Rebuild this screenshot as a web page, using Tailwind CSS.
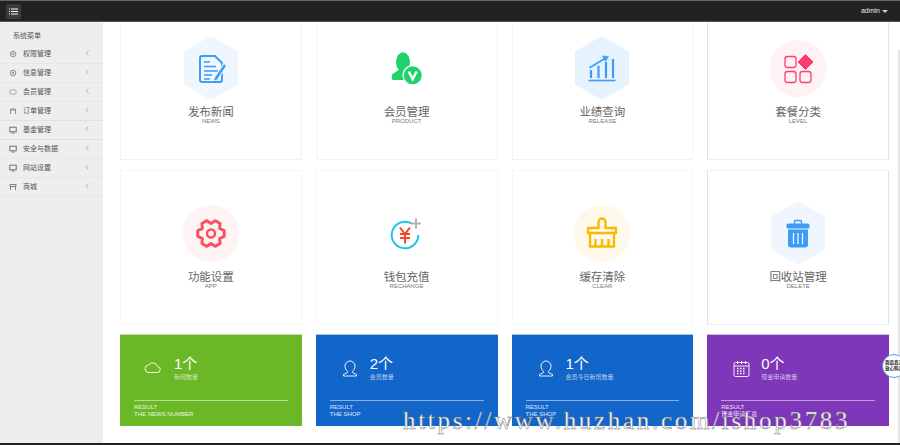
<!DOCTYPE html>
<html lang="en">
  <head>
    <meta charset="UTF-8" />
    <title>后台管理</title>
    <script src="https://cdn.jsdelivr.net/npm/@tailwindcss/browser@4"></script>
  </head>
  <body class="bg-white font-['Liberation_Sans','Noto_Sans_CJK_SC',sans-serif] overflow-hidden">
    <div class="relative h-[445px] w-[900px] flex flex-col overflow-hidden">
      <!-- top bar -->
      <header class="h-[22px] shrink-0 bg-[#222222] border-t border-t-[#666666] border-b border-b-[#555555] flex items-center justify-between pl-[6px] pr-[12px] relative z-10">
        <button class="w-[15px] h-[15px] rounded-[2px] bg-[#3c3c3c] flex items-center justify-center">
          <svg width="9" height="7" viewBox="0 0 9 7" fill="none" stroke="#ffffff" stroke-width="1">
            <path d="M0 1h1M2 1h7M0 3.5h1M2 3.5h7M0 6h1M2 6h7" />
          </svg>
        </button>
        <div class="flex items-center gap-[2px] text-[7px] text-[#e4e4e4]">
          <span>admin</span>
          <span class="w-0 h-0 border-x-[3px] border-x-transparent border-t-[3px] border-t-[#cccccc]"></span>
        </div>
      </header>

      <div class="flex-1 flex min-h-0">
        <!-- sidebar -->
        <aside class="w-[103px] shrink-0 bg-[#eeeeee] text-[#555555] text-[7px]">
          <div class="h-[23px] pl-[13px] pt-[8px] leading-[11px] border-b border-[#e8e8e8]">系统菜单</div>
          <div class="h-[19px] pl-[9px] pr-[14px] flex items-center border-b border-[#e6e6e6]">
            <svg class="w-[8px] h-[8px] shrink-0" viewBox="0 0 8 8" fill="none" stroke="#777777" stroke-width="0.8"><circle cx="4" cy="4" r="2.8" /><circle cx="4" cy="4" r="0.9" /></svg>
            <span class="ml-[6px] flex-1">权限管理</span>
            <svg class="w-[4px] h-[6px] -mt-[3px]" viewBox="0 0 4 6" fill="none" stroke="#aaaaaa" stroke-width="0.8"><path d="M3.5 .5 1 3l2.5 2.5" /></svg>
          </div>
          <div class="h-[19px] pl-[9px] pr-[14px] flex items-center border-b border-[#e6e6e6]">
            <svg class="w-[8px] h-[8px] shrink-0" viewBox="0 0 8 8" fill="none" stroke="#777777" stroke-width="0.8"><circle cx="4" cy="4" r="2.8" /><circle cx="4" cy="4" r="0.9" /></svg>
            <span class="ml-[6px] flex-1">信息管理</span>
            <svg class="w-[4px] h-[6px] -mt-[3px]" viewBox="0 0 4 6" fill="none" stroke="#aaaaaa" stroke-width="0.8"><path d="M3.5 .5 1 3l2.5 2.5" /></svg>
          </div>
          <div class="h-[19px] pl-[9px] pr-[14px] flex items-center border-b border-[#e6e6e6]">
            <svg class="w-[8px] h-[8px] shrink-0" viewBox="0 0 8 8" fill="none" stroke="#999999" stroke-width="0.8"><rect x="1" y="1.8" width="6" height="4.4" rx="1" /></svg>
            <span class="ml-[6px] flex-1">会员管理</span>
            <svg class="w-[4px] h-[6px] -mt-[3px]" viewBox="0 0 4 6" fill="none" stroke="#aaaaaa" stroke-width="0.8"><path d="M3.5 .5 1 3l2.5 2.5" /></svg>
          </div>
          <div class="h-[19px] pl-[9px] pr-[14px] flex items-center border-b border-[#e2e2e2]">
            <svg class="w-[8px] h-[8px] shrink-0" viewBox="0 0 8 8" fill="none" stroke="#777777" stroke-width="0.8"><path d="M1.5 7V2h5v5M3 2v2M5 2v2" /></svg>
            <span class="ml-[6px] flex-1">订单管理</span>
            <svg class="w-[4px] h-[6px] -mt-[3px]" viewBox="0 0 4 6" fill="none" stroke="#aaaaaa" stroke-width="0.8"><path d="M3.5 .5 1 3l2.5 2.5" /></svg>
          </div>
          <div class="h-[19px] pl-[9px] pr-[14px] flex items-center border-b border-[#e2e2e2]">
            <svg class="w-[8px] h-[8px] shrink-0" viewBox="0 0 8 8" fill="none" stroke="#666666" stroke-width="0.9"><rect x="0.8" y="1.2" width="6.4" height="4.6" /><path d="M2.5 7h3" /></svg>
            <span class="ml-[6px] flex-1">基金管理</span>
            <svg class="w-[4px] h-[6px] -mt-[3px]" viewBox="0 0 4 6" fill="none" stroke="#aaaaaa" stroke-width="0.8"><path d="M3.5 .5 1 3l2.5 2.5" /></svg>
          </div>
          <div class="h-[19px] pl-[9px] pr-[14px] flex items-center border-b border-[#e6e6e6]">
            <svg class="w-[8px] h-[8px] shrink-0" viewBox="0 0 8 8" fill="none" stroke="#666666" stroke-width="0.9"><rect x="0.8" y="1.2" width="6.4" height="4.6" /><path d="M2.5 7h3" /></svg>
            <span class="ml-[6px] flex-1">安全与数据</span>
            <svg class="w-[4px] h-[6px] -mt-[3px]" viewBox="0 0 4 6" fill="none" stroke="#aaaaaa" stroke-width="0.8"><path d="M3.5 .5 1 3l2.5 2.5" /></svg>
          </div>
          <div class="h-[19px] pl-[9px] pr-[14px] flex items-center border-b border-[#e6e6e6]">
            <svg class="w-[8px] h-[8px] shrink-0" viewBox="0 0 8 8" fill="none" stroke="#666666" stroke-width="0.9"><rect x="0.8" y="1.2" width="6.4" height="4.6" /><path d="M2.5 7h3" /></svg>
            <span class="ml-[6px] flex-1">网站设置</span>
            <svg class="w-[4px] h-[6px] -mt-[3px]" viewBox="0 0 4 6" fill="none" stroke="#aaaaaa" stroke-width="0.8"><path d="M3.5 .5 1 3l2.5 2.5" /></svg>
          </div>
          <div class="h-[19px] pl-[9px] pr-[14px] flex items-center border-b border-[#e6e6e6]">
            <svg class="w-[8px] h-[8px] shrink-0" viewBox="0 0 8 8" fill="none" stroke="#666666" stroke-width="0.8"><path d="M1 1.5h6v2H1zM1.5 3.5V7M6.5 3.5V7" /></svg>
            <span class="ml-[6px] flex-1">商城</span>
            <svg class="w-[4px] h-[6px] -mt-[3px]" viewBox="0 0 4 6" fill="none" stroke="#aaaaaa" stroke-width="0.8"><path d="M3.5 .5 1 3l2.5 2.5" /></svg>
          </div>
        </aside>

        <!-- content, scrolled a little so the first row sits under the bar -->
        <main class="flex-1 min-w-0 overflow-hidden pl-[17px] pr-[11px]">
          <div class="-mt-[17px] grid grid-cols-4 gap-x-[14px] gap-y-[10px]">
            <a class="h-[155px] border border-[#f2f2f2] flex flex-col items-center pt-[31px]">
              <svg width="58" height="62" viewBox="0 0 58 62" fill="none">
                <path d="M29 0 55 15V47L29 62 3 47V15Z" fill="#eff6fd" stroke="#eff6fd" stroke-width="2" stroke-linejoin="round" />
                <path d="M40 34v9a2 2 0 0 1-2 2H20a2 2 0 0 1-2-2V21a2 2 0 0 1 2-2h13l7 7v6" stroke="#3b9df8" stroke-width="2" />
                <path d="M22 25h6M22 29.500h12M22 34h14M22 38h8M22 42h6" stroke="#3b9df8" stroke-width="1.500" />
                <path d="M33 43 43 28" stroke="#eff6fd" stroke-width="5" />
                <path d="M33 43 43 28" stroke="#3b9df8" stroke-width="2.500" />
              </svg>
              <div class="mt-[6px] text-[11.5px] leading-[14px] text-[#666666]">发布新闻</div>
              <div class="text-[6px] leading-[5px] text-[#777777]">NEWS</div>
            </a>
            <a class="h-[155px] border border-[#f2f2f2] flex flex-col items-center pt-[31px]">
              <svg width="58" height="62" viewBox="0 0 58 62" fill="none">
                <ellipse cx="25" cy="25" rx="7" ry="9.700" fill="#20d26c" />
                <path d="M21 31c0 3.500-5.500 4.500-6.800 6.500-.5 1-.5 3-.5 4 0 1 1 1.500 2 1.500H30l3-10-5-2Z" fill="#20d26c" />
                <circle cx="34.700" cy="38.300" r="10.300" fill="#ffffff" />
                <circle cx="34.700" cy="38.300" r="9" fill="#20d26c" />
                <path d="M30.700 34.500l4 7.500 4-7.500" stroke="#ffffff" stroke-width="2.500" />
              </svg>
              <div class="mt-[6px] text-[11.5px] leading-[14px] text-[#666666]">会员管理</div>
              <div class="text-[6px] leading-[5px] text-[#777777]">PRODUCT</div>
            </a>
            <a class="h-[155px] border border-[#f2f2f2] flex flex-col items-center pt-[31px]">
              <svg width="58" height="62" viewBox="0 0 58 62" fill="none">
                <path d="M29 0 55 15V47L29 62 3 47V15Z" fill="#e6f3fe" stroke="#e6f3fe" stroke-width="2" stroke-linejoin="round" />
                <path d="M15.500 43.500h27" stroke="#3b9df8" stroke-width="1.600" />
                <path d="M18 41V33M25.500 41V28.700M33 41V25M40 41V22" stroke="#3b9df8" stroke-width="2.200" />
                <path d="M16.500 30.700 32 21.500" stroke="#3b9df8" stroke-width="1.700" />
                <path d="M35.500 19.500 29.500 19 32.500 24.500Z" fill="#3b9df8" stroke="#3b9df8" stroke-width=".6" />
              </svg>
              <div class="mt-[6px] text-[11.5px] leading-[14px] text-[#666666]">业绩查询</div>
              <div class="text-[6px] leading-[5px] text-[#777777]">RELEASE</div>
            </a>
            <a class="h-[155px] border-x border-x-[#e2e2e2] border-b border-b-[#eeeeee] border-t border-t-[#f2f2f2] flex flex-col items-center pt-[31px]">
              <svg width="58" height="62" viewBox="0 0 58 62" fill="none">
                <circle cx="29" cy="31.500" r="28.500" fill="#fff2f4" />
                <rect x="16" y="19.500" width="11" height="11" rx="2.500" stroke="#fb3f6c" stroke-width="1.300" />
                <rect x="16" y="34.500" width="11" height="11" rx="2.500" stroke="#fb3f6c" stroke-width="1.300" />
                <rect x="31" y="34.500" width="11" height="11" rx="2.500" stroke="#fb3f6c" stroke-width="1.300" />
                <path d="M36.500 17.500 44 25l-7.500 7.500L29 25Z" fill="#fb3f6c" stroke="#fb3f6c" stroke-linejoin="round" />
              </svg>
              <div class="mt-[6px] text-[11.5px] leading-[14px] text-[#666666]">套餐分类</div>
              <div class="text-[6px] leading-[5px] text-[#777777]">LEVEL</div>
            </a>

            <a class="h-[155px] border border-[#f6f6f6] flex flex-col items-center pt-[31px]">
              <svg width="58" height="62" viewBox="0 0 58 62" fill="none">
                <circle cx="29" cy="31.500" r="28.500" fill="#fff4f4" />
                <path d="M42.200 28.700 37.660 26.500 38.030 21.470 33.170 18.660 29 21.500 24.830 18.660 19.970 21.470 20.340 26.500 15.800 28.700V34.300L20.340 36.500 19.970 41.530 24.830 44.340 29 41.500 33.170 44.340 38.030 41.530 37.660 36.500 42.200 34.300Z" stroke="#fb5060" stroke-width="3" stroke-linejoin="round" />
                <circle cx="29" cy="31.500" r="4" stroke="#fb5060" stroke-width="2.500" />
              </svg>
              <div class="mt-[6px] text-[11.5px] leading-[14px] text-[#666666]">功能设置</div>
              <div class="text-[6px] leading-[5px] text-[#777777]">APP</div>
            </a>
            <a class="h-[155px] border border-[#f6f6f6] flex flex-col items-center pt-[31px]">
              <svg width="58" height="62" viewBox="0 0 58 62" fill="none">
                <path d="M33.700 21.500A13.300 13.300 0 1 0 40.300 33" stroke="#1fc4ee" stroke-width="2" />
                <path d="M22 25.500l5 6.500 5-6.500M22 32h10M22 36h10M27 32v9.500" stroke="#f5452f" stroke-width="2" />
                <path d="M38 16.500v10M33 21.500h10" stroke="#b4b4b4" stroke-width="2" />
              </svg>
              <div class="mt-[6px] text-[11.5px] leading-[14px] text-[#666666]">钱包充值</div>
              <div class="text-[6px] leading-[5px] text-[#777777]">RECHANGE</div>
            </a>
            <a class="h-[155px] border border-[#f6f6f6] flex flex-col items-center pt-[31px]">
              <svg width="58" height="62" viewBox="0 0 58 62" fill="none">
                <circle cx="29" cy="31.500" r="28.500" fill="#fff9ec" />
                <path d="M25.500 26v-6a3.500 3.500 0 0 1 7 0v6H43v5H15v-5Z" stroke="#fdb900" stroke-width="2.400" stroke-linejoin="round" />
                <path d="M17 31v13.500h24V31M22.500 44v-7M29 44v-7M35.500 44v-7" stroke="#fdb900" stroke-width="2.400" />
              </svg>
              <div class="mt-[6px] text-[11.5px] leading-[14px] text-[#666666]">缓存清除</div>
              <div class="text-[6px] leading-[5px] text-[#777777]">CLEAR</div>
            </a>
            <a class="h-[155px] border-x border-x-[#e2e2e2] border-b border-b-[#eeeeee] border-t border-t-[#f2f2f2] flex flex-col items-center pt-[31px]">
              <svg width="58" height="62" viewBox="0 0 58 62" fill="none">
                <path d="M29 0 55 15V47L29 62 3 47V15Z" fill="#eff6fd" stroke="#eff6fd" stroke-width="2" stroke-linejoin="round" />
                <path d="M25.500 22v-2a1.500 1.500 0 0 1 1.500-1.500h4a1.500 1.500 0 0 1 1.500 1.500v2" stroke="#3b9df8" stroke-width="1.400" />
                <rect x="17.500" y="21.500" width="23" height="5" rx="1.500" fill="#3b9df8" />
                <path d="M19 27.500h20v15a3 3 0 0 1-3 3H22a3 3 0 0 1-3-3Z" fill="#3b9df8" />
                <path d="M24.500 31v11M29 31v11M33.500 31v11" stroke="#ffffff" stroke-width="1.200" />
              </svg>
              <div class="mt-[6px] text-[11.5px] leading-[14px] text-[#666666]">回收站管理</div>
              <div class="text-[6px] leading-[5px] text-[#777777]">DELETE</div>
            </a>
          </div>

          <!-- stat tiles -->
          <div class="mt-[9px] grid grid-cols-4 gap-x-[14px]">
            <div class="h-[92px] bg-[#6ab826] border-t border-t-[#c5dfa8] px-[14px] text-white flex flex-col">
              <div class="h-[65px] flex pt-[20px] pl-[10px]">
                <svg class="mt-[5px]" width="17" height="14" viewBox="0 0 17 14" fill="none" stroke="#ffffff" stroke-width="0.900"><path d="M4 12.500H13a3 3 0 0 0 .5-6A5 5 0 0 0 4.500 5 3.800 3.800 0 0 0 4 12.500Z" /></svg>
                <div class="ml-[13px]">
                  <div class="text-[15px] leading-[18px]">1个</div>
                  <div class="text-[6px] leading-[8px] text-white/70">新闻数量</div>
                </div>
              </div>
              <div class="border-t border-white/50 pt-[3px] text-[6px] leading-[7px] text-white/85">RESULT<br />THE NEWS NUMBER</div>
            </div>
            <div class="h-[92px] bg-[#1265c9] border-t border-t-[#a8c3e8] px-[14px] text-white flex flex-col">
              <div class="h-[65px] flex pt-[20px] pl-[11px]">
                <svg class="mt-[5px]" width="18" height="18" viewBox="0 0 17 18" fill="none" stroke="#ffffff" stroke-width="0.900"><path d="M6 11.500C4.500 10 3.500 8 3.500 6a5 5 0 0 1 10 0c0 2-1 4-2.500 5.500v1l4 2V16H2v-1.500l4-2Z" /></svg>
                <div class="ml-[11px]">
                  <div class="text-[15px] leading-[18px]">2个</div>
                  <div class="text-[6px] leading-[8px] text-white/70">会员数量</div>
                </div>
              </div>
              <div class="border-t border-white/50 pt-[3px] text-[6px] leading-[7px] text-white/85">RESULT<br />THE SHOP</div>
            </div>
            <div class="h-[92px] bg-[#1265c9] border-t border-t-[#a8c3e8] px-[14px] text-white flex flex-col">
              <div class="h-[65px] flex pt-[20px] pl-[11px]">
                <svg class="mt-[5px]" width="18" height="18" viewBox="0 0 17 18" fill="none" stroke="#ffffff" stroke-width="0.900"><path d="M6 11.500C4.500 10 3.500 8 3.500 6a5 5 0 0 1 10 0c0 2-1 4-2.500 5.500v1l4 2V16H2v-1.500l4-2Z" /></svg>
                <div class="ml-[11px]">
                  <div class="text-[15px] leading-[18px]">1个</div>
                  <div class="text-[6px] leading-[8px] text-white/70">会员今日新增数量</div>
                </div>
              </div>
              <div class="border-t border-white/50 pt-[3px] text-[6px] leading-[7px] text-white/85">RESULT<br />THE SHOP</div>
            </div>
            <div class="h-[92px] bg-[#7e37b9] border-t border-t-[#d0b5e6] px-[14px] text-white flex flex-col">
              <div class="h-[65px] flex pt-[20px] pl-[12px]">
                <svg class="mt-[5px]" width="17" height="18" viewBox="0 0 17 18" fill="none" stroke="#ffffff" stroke-width="0.900"><rect x="1" y="2.500" width="15" height="14" rx="1.500" /><path d="M1 6h15M4.500 1v3M8.500 1v3M12.500 1v3" /><path d="M4 8.500h9M4 11h9M4 13.500h9" stroke-dasharray="1.500 1.500" stroke-width="1.300" /></svg>
                <div class="ml-[11px]">
                  <div class="text-[15px] leading-[18px]">0个</div>
                  <div class="text-[6px] leading-[8px] text-white/70">现金申请数量</div>
                </div>
              </div>
              <div class="border-t border-white/50 pt-[3px] text-[6px] leading-[7px] text-white/85">RESULT<br />现金申请汇总</div>
            </div>
          </div>
        </main>
      </div>

      <!-- footer strip -->
      <div class="h-[2px] shrink-0 bg-[#222222]"></div>

      <!-- page scrollbar edge -->
      <div class="absolute right-0 top-[50px] bottom-[2px] w-[2px] bg-[#e4e4e4]"></div>

      <!-- floating badge -->
      <div class="absolute left-[882px] top-[354px] w-[24px] h-[24px] rounded-full bg-white border border-[#4a9df0] flex items-center justify-center text-[4.5px] leading-[6px] font-bold text-[#222222] text-center">
        <span>商品真实<br />放心购买</span>
      </div>

      <!-- watermark -->
      <div class="absolute left-[403px] top-[407px] font-['Liberation_Serif',serif] text-[25px] tracking-[2.7px] leading-[28px] whitespace-nowrap text-white [-webkit-text-stroke:0.5px_#777777]">https://www.huzhan.com/ishop3783</div>
    </div>
  </body>
</html>
